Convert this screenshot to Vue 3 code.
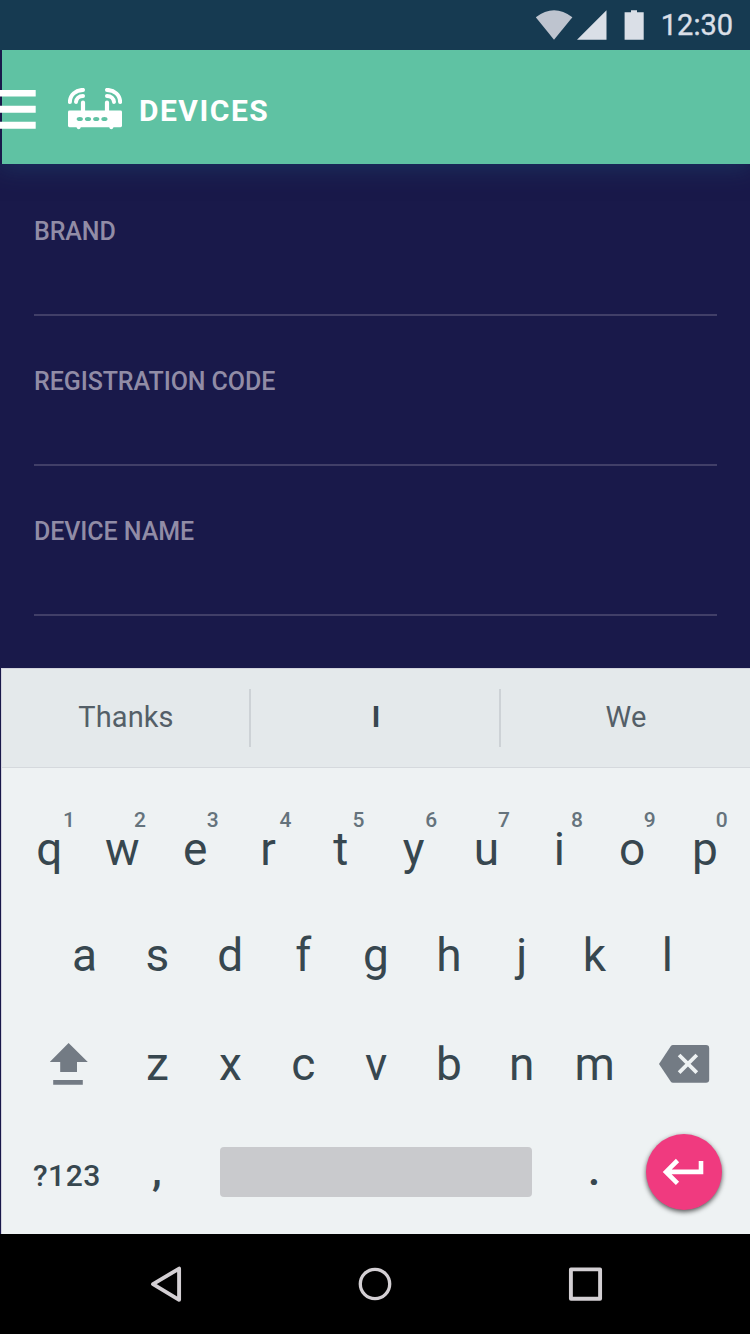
<script setup>
const fields = ['BRAND', 'REGISTRATION CODE', 'DEVICE NAME']
const topRow = 'qwertyuiop'.split('').map((letter, i) => ({ letter, hint: (i + 1) % 10 }))
const middleRow = 'asdfghjkl'.split('')
const bottomRow = 'zxcvbnm'.split('')
</script>

<template>
  <div class="screen">
    <div class="status">
      <svg class="status-icons" width="126" height="50" viewBox="0 0 126 50">
        <path d="M15.800 17.200Q34 3.200 52.400 17.200L34 39.700Z" fill="#bec4cf" />
        <path d="M86.500 10.300V39.800H57Z" fill="#dadfe7" />
        <path d="M111 10.300H117V12.300H123.700V39.800H104.600V12.300H111Z" fill="#dadfe7" />
      </svg>
      <span class="time">12:30</span>
    </div>

    <header class="bar">
      <svg class="menu" width="36" height="40" viewBox="0 0 36 40">
        <path d="M0 -.4H35.700V6.600H0ZM0 15.700H35.700V22.700H0ZM0 31.700H35.700V38.700H0Z" fill="#fff" />
      </svg>
      <svg class="router" width="54" height="42" viewBox="0 0 54 42">
        <g fill="none" stroke="#fff" stroke-linecap="round">
          <path d="M1.900 14C2 7 7.500 2 15 1.900M8 14C8.200 10.500 11 8 15 7.900M52.100 14C52 7 46.500 2 39 1.900M46 14C45.800 10.500 43 8 39 7.900" stroke-width="4" />
          <path d="M15 14.500V24M39 14.500V24" stroke-width="4.200" />
        </g>
        <path fill="#fff" d="M1.500 22.600H52.500Q54 22.600 54 24V37.800Q54 39.200 52.500 39.200H45.500Q45 41.200 43.300 41.200T41.200 39.200H12.800Q12.400 41.200 10.700 41.200T8.500 39.200H1.500Q0 39.200 0 37.800V24Q0 22.600 1.500 22.600Z" />
        <g fill="#5fc2a3">
          <ellipse cx="11.800" cy="30.900" rx="3.100" ry="2" />
          <ellipse cx="20" cy="30.900" rx="3.100" ry="2" />
          <ellipse cx="28.200" cy="30.900" rx="3.100" ry="2" />
          <ellipse cx="36.400" cy="30.900" rx="3.100" ry="2" />
        </g>
      </svg>
      <h1>DEVICES</h1>
    </header>

    <main class="form">
      <div v-for="f in fields" :key="f" class="field">{{ f }}</div>
    </main>

    <section class="keyboard">
      <div class="suggestions">
        <span>Thanks</span>
        <span class="best">I</span>
        <span>We</span>
      </div>
      <div class="keys">
        <div class="row">
          <div v-for="k in topRow" :key="k.letter" class="key">
            {{ k.letter }}<sup>{{ k.hint }}</sup>
          </div>
        </div>
        <div class="row middle">
          <div v-for="k in middleRow" :key="k" class="key">{{ k }}</div>
        </div>
        <div class="row bottom">
          <div class="side">
            <svg width="38" height="42" viewBox="0 0 38 42" fill="#737b84">
              <path d="M18.600 0L37.800 19H27V28.900H10.200V19H-.2ZM3.200 37.100H32.800V41.700H3.200Z" />
            </svg>
          </div>
          <div v-for="k in bottomRow" :key="k" class="key">{{ k }}</div>
          <div class="side right">
            <svg width="51" height="38" viewBox="0 0 51 38">
              <path d="M14 0H47Q50.200 0 50.200 3.200V34.600Q50.200 37.800 47 37.800H14Q12.600 37.800 11.700 36.500L0 18.900L11.700 1.300Q12.600 0 14 0Z" fill="#737b84" />
              <path d="M20.100 10L37.800 27.700M37.800 10L20.100 27.700" stroke="#eef2f3" stroke-width="3.800" />
            </svg>
          </div>
        </div>
        <div class="row last">
          <div class="symbols">?123</div>
          <div class="punct">,</div>
          <div class="space"></div>
          <div class="punct dot">.</div>
          <div class="enter">
            <svg width="76" height="76" viewBox="0 0 76 76" fill="none" stroke="#fff">
              <path d="M55 27V37.900H20.500M31.500 26.500L20 37.900L31.500 49.400" stroke-width="4.600" />
            </svg>
          </div>
        </div>
      </div>
    </section>

    <nav class="nav">
      <svg width="750" height="100" viewBox="0 0 750 100" fill="none" stroke="#d3cfd3" stroke-linejoin="round">
        <path d="M179.100 34.600V65.800L153 50.200Z" stroke-width="3.900" />
        <circle cx="375" cy="50" r="14.700" stroke-width="3.300" />
        <rect x="570.900" y="35.400" width="29.200" height="29.300" stroke-width="3.900" />
      </svg>
    </nav>
  </div>
</template>

<style>
body {
  margin: 0;
  background: #19194a;
}
</style>

<style scoped>
.screen {
  width: 750px;
  height: 1334px;
  overflow: hidden;
  display: flex;
  flex-direction: column;
  background: #19194a;
  font-family: Roboto, "Liberation Sans", sans-serif;
}
.status {
  position: relative;
  z-index: 1;
  flex: none;
  height: 50px;
  background: #163a51;
  display: flex;
  justify-content: flex-end;
  box-sizing: border-box;
  padding-right: 17px;
}
.status-icons {
  margin-right: 16px;
}
.time {
  width: 71px;
  font-size: 29px;
  line-height: 50px;
  white-space: nowrap;
  color: #dadfe7;
  display: flex;
  justify-content: flex-end;
  -webkit-text-stroke: 0.400px #dadfe7;
}
.bar {
  height: 114px;
  flex: none;
  display: flex;
  align-items: flex-start;
  background: linear-gradient(90deg, #19194a 2px, #5fc2a3 2px);
  box-shadow: 0 4px 22px rgba(30, 70, 110, 0.55);
}
.menu {
  margin-top: 40px;
}
.router {
  margin: 37.500px 0 0 32px;
}
h1 {
  margin: 0 0 0 17px;
  font-size: 30px;
  font-weight: 700;
  line-height: 121px;
  letter-spacing: 1.500px;
  color: #fff;
}
.form {
  flex: none;
  height: 504px;
  padding: 0 33px 0 34px;
}
.field {
  height: 150px;
  box-sizing: border-box;
  padding-top: 53px;
  font-size: 25px;
  font-weight: 500;
  line-height: 30px;
  letter-spacing: -0.080px;
  color: #918ca6;
}
.field::after {
  content: "";
  display: block;
  height: 2px;
  margin-top: 67px;
  background: #413f68;
}
.keyboard {
  flex: none;
  height: 566px;
  margin-left: 1px;
  background: #eef2f3;
  border-left: 1px solid #d3d3de;
  box-sizing: border-box;
}
.suggestions {
  height: 100px;
  box-sizing: border-box;
  display: grid;
  grid-template-columns: 248px 248px 1fr;
  gap: 2px;
  align-items: center;
  padding-bottom: 2px;
  background:
    linear-gradient(#cdd2d6, #cdd2d6) no-repeat 247px 20px / 2px 58px,
    linear-gradient(#cdd2d6, #cdd2d6) no-repeat 497px 20px / 2px 58px,
    #e4e9eb;
  border-top: 1px solid #d3d3de;
  border-bottom: 1px solid #d5d9dd;
  color: #545f68;
  font-size: 29px;
  text-align: center;
}
.suggestions span {
  letter-spacing: 0.100px;
}
.suggestions .best {
  padding-left: 0;
  font-weight: 700;
  color: #37474f;
}
.keys {
  height: 466px;
  color: #37474f;
}
.row {
  display: flex;
  height: 108px;
  padding-left: 11px;
  line-height: 108px;
}
.row:first-child {
  padding-top: 27px;
  height: 106px;
}
.key {
  position: relative;
  flex: none;
  width: 72.850px;
  text-align: center;
  font-size: 46px;
}
sup {
  position: absolute;
  left: 44px;
  top: 13px;
  width: 20px;
  font-size: 21px;
  font-weight: 500;
  line-height: 24px;
  color: #65737c;
}
.key:first-child sup {
  left: 46px;
}
.key:last-child sup {
  left: 43px;
}
.middle {
  padding-left: 46.200px;
}
.bottom {
  padding: 1px 0 0;
}
.side {
  width: 119.500px;
  display: flex;
  align-items: center;
  padding-left: 48px;
  box-sizing: border-box;
}
.side.right {
  padding-left: 27.500px;
}
.last {
  padding-left: 0;
  align-items: center;
}
.symbols {
  width: 104px;
  padding: 8px 0 0 31px;
  box-sizing: border-box;
  font-size: 30px;
  font-weight: 500;
  letter-spacing: 0.500px;
}
.punct {
  width: 102px;
  text-align: center;
  font-size: 40px;
  font-weight: 700;
}
.space {
  width: 312px;
  height: 50px;
  border-radius: 4px;
  background: #c9cacd;
  margin-left: 12px;
}
.dot {
  margin-left: 11px;
}
.enter {
  width: 76px;
  height: 76px;
  margin-left: 1px;
  border-radius: 50%;
  background: #f03a7f;
  box-shadow: 0 2px 5px rgba(0, 0, 0, 0.65);
}
.enter svg {
  display: block;
}
.nav {
  height: 100px;
  flex: none;
  background: #000;
}
</style>
